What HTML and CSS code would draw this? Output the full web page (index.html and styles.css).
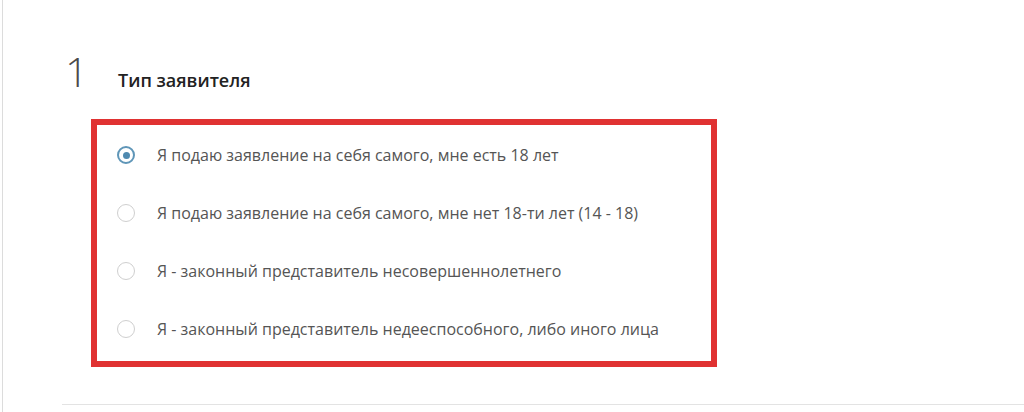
FILE: index.html
```html
<!DOCTYPE html>
<html lang="ru">
<head>
<meta charset="utf-8">
<link rel="stylesheet" href="styles.css">
</head>
<body>
<div class="page">
  <section class="step">
    <div class="step-head">
      <span class="step-num">1</span>
      <h2 class="step-title">Тип заявителя</h2>
    </div>
    <div class="options">
      <label class="option">
        <span class="radio radio-checked"></span>
        <span class="option-text">Я подаю заявление на себя самого, мне есть 18 лет</span>
      </label>
      <label class="option">
        <span class="radio"></span>
        <span class="option-text">Я подаю заявление на себя самого, мне нет 18-ти лет (14 - 18)</span>
      </label>
      <label class="option">
        <span class="radio"></span>
        <span class="option-text">Я - законный представитель несовершеннолетнего</span>
      </label>
      <label class="option">
        <span class="radio"></span>
        <span class="option-text">Я - законный представитель недееспособного, либо иного лица</span>
      </label>
    </div>
  </section>
  <div class="divider"></div>
</div>
</body>
</html>
```

FILE: styles.css
```css
html, body {
  margin: 0;
  padding: 0;
  background: #fff;
}
body {
  font-family: "Open Sans", "Liberation Sans", sans-serif;
  width: 1024px;
  height: 412px;
  overflow: hidden;
}
.page {
  margin-left: 2px;
  border-left: 1px solid #dcdcdc;
  height: 412px;
  box-sizing: border-box;
  padding-top: 47px;
}
.step {
  padding-left: 60px;
}
.step-head {
  display: flex;
  align-items: baseline;
  height: 60px;
}
.step-num {
  font-size: 41px;
  font-weight: 300;
  color: #4a4a4a;
  width: 55px;
  line-height: 48px;
  padding-left: 2px;
  box-sizing: border-box;
}
.step-title {
  margin: 0;
  font-size: 18px;
  font-weight: 600;
  color: #222;
}
.options {
  margin-left: 28px;
  width: 626px;
  height: 248px;
  box-sizing: border-box;
  border: 6px solid #e03232;
  padding: 1px 0 0 20px;
  margin-top: 12px;
}
.option {
  display: flex;
  align-items: center;
  height: 58px;
}
.radio {
  width: 18px;
  height: 18px;
  box-sizing: border-box;
  border: 1px solid #cfcfcf;
  border-radius: 50%;
  margin-right: 22px;
  flex: none;
  position: relative;
}
.radio-checked {
  border: 2px solid #5f96b8;
}
.radio-checked::after {
  content: "";
  position: absolute;
  left: 50%;
  top: 50%;
  width: 7px;
  height: 7px;
  margin: -3.5px 0 0 -3.5px;
  border-radius: 50%;
  background: #4f8ab0;
}
.option-text {
  font-size: 16px;
  color: #555;
}
.divider {
  margin-left: 59px;
  margin-top: 37px;
  border-top: 1px solid #e3e3e3;
}
```
